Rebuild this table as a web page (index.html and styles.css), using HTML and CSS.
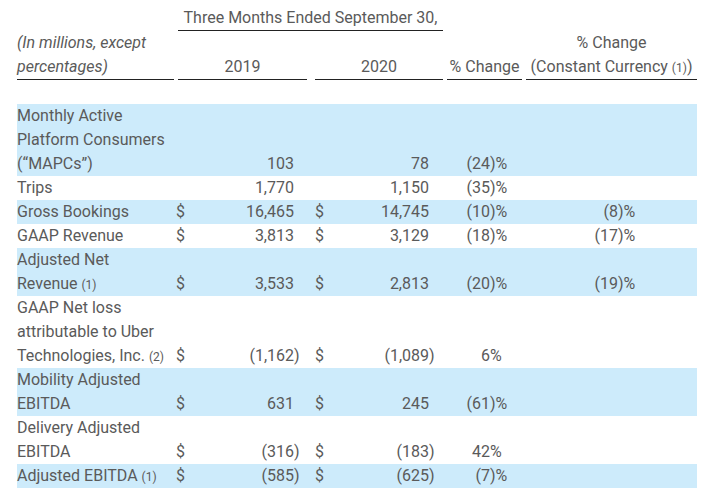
FILE: index.html
```html
<!DOCTYPE html>
<html lang="en">
<head>
<meta charset="utf-8">
<title>Uber Q3 2020 Key Metrics</title>
<link rel="stylesheet" href="styles.css">
</head>
<body>
<table class="fin">
  <colgroup>
    <col class="w-label">
    <col class="w-cur1">
    <col class="w-num1">
    <col class="w-par1">
    <col class="w-cur2">
    <col class="w-num2">
    <col class="w-par2">
    <col class="w-pct">
    <col class="w-pctsfx">
    <col class="w-cc">
    <col class="w-ccsfx">
  </colgroup>
  <thead>
    <tr class="h1">
      <th></th>
      <th colspan="6" class="hc"><div class="ul ul-three">Three Months Ended September 30,</div></th>
      <th colspan="2"></th>
      <th colspan="2"></th>
    </tr>
    <tr class="h2">
      <th class="hl"><div class="ul ul-label"><i>(In millions, except<br>percentages)</i></div></th>
      <th colspan="3" class="hc"><div class="ul ul-2019">2019</div></th>
      <th colspan="3" class="hc"><div class="ul ul-2020">2020</div></th>
      <th colspan="2" class="hc"><div class="ul ul-pct">% Change</div></th>
      <th colspan="2" class="hc"><div class="ul ul-cc">% Change<br>(Constant Currency <small>(1)</small>)</div></th>
    </tr>
    <tr class="spacer"><th colspan="11"></th></tr>
  </thead>
  <tbody>
    <tr class="blue">
      <td class="lbl">Monthly Active<br>Platform Consumers<br>(“MAPCs”)</td>
      <td></td><td class="n">103</td><td></td>
      <td></td><td class="n">78</td><td></td>
      <td class="n">(24</td><td class="s">)%</td>
      <td></td><td></td>
    </tr>
    <tr>
      <td class="lbl">Trips</td>
      <td></td><td class="n">1,770</td><td></td>
      <td></td><td class="n">1,150</td><td></td>
      <td class="n">(35</td><td class="s">)%</td>
      <td></td><td></td>
    </tr>
    <tr class="blue">
      <td class="lbl">Gross Bookings</td>
      <td class="c1">$</td><td class="n">16,465</td><td></td>
      <td class="c2">$</td><td class="n">14,745</td><td></td>
      <td class="n">(10</td><td class="s">)%</td>
      <td class="n">(8</td><td class="s">)%</td>
    </tr>
    <tr>
      <td class="lbl">GAAP Revenue</td>
      <td class="c1">$</td><td class="n">3,813</td><td></td>
      <td class="c2">$</td><td class="n">3,129</td><td></td>
      <td class="n">(18</td><td class="s">)%</td>
      <td class="n">(17</td><td class="s">)%</td>
    </tr>
    <tr class="blue">
      <td class="lbl">Adjusted Net<br>Revenue <small>(1)</small></td>
      <td class="c1">$</td><td class="n">3,533</td><td></td>
      <td class="c2">$</td><td class="n">2,813</td><td></td>
      <td class="n">(20</td><td class="s">)%</td>
      <td class="n">(19</td><td class="s">)%</td>
    </tr>
    <tr>
      <td class="lbl">GAAP Net loss<br>attributable to Uber<br>Technologies, Inc. <small>(2)</small></td>
      <td class="c1">$</td><td class="n">(1,162</td><td class="p">)</td>
      <td class="c2">$</td><td class="n">(1,089</td><td class="p">)</td>
      <td class="n">6</td><td class="s">%</td>
      <td></td><td></td>
    </tr>
    <tr class="blue">
      <td class="lbl">Mobility Adjusted<br>EBITDA</td>
      <td class="c1">$</td><td class="n">631</td><td></td>
      <td class="c2">$</td><td class="n">245</td><td></td>
      <td class="n">(61</td><td class="s">)%</td>
      <td></td><td></td>
    </tr>
    <tr>
      <td class="lbl">Delivery Adjusted<br>EBITDA</td>
      <td class="c1">$</td><td class="n">(316</td><td class="p">)</td>
      <td class="c2">$</td><td class="n">(183</td><td class="p">)</td>
      <td class="n">42</td><td class="s">%</td>
      <td></td><td></td>
    </tr>
    <tr class="blue">
      <td class="lbl">Adjusted EBITDA <small>(1)</small></td>
      <td class="c1">$</td><td class="n">(585</td><td class="p">)</td>
      <td class="c2">$</td><td class="n">(625</td><td class="p">)</td>
      <td class="n">(7</td><td class="s">)%</td>
      <td></td><td></td>
    </tr>
  </tbody>
</table>
</body>
</html>
```

FILE: styles.css
```css
html, body {
  margin: 0;
  padding: 0;
  background: #ffffff;
}
body {
  padding: 6px 0 0 17px;
  font-family: Roboto, "Liberation Sans", sans-serif;
  font-size: 16px;
  line-height: 24px;
  color: #5a5a5a;
}
.fin {
  border-collapse: collapse;
  border-spacing: 0;
  table-layout: fixed;
  width: 680px;
}
.w-label { width: 159px; }
.w-cur1 { width: 20px; }
.w-num1 { width: 98px; }
.w-par1 { width: 17px; }
.w-cur2 { width: 22px; }
.w-num2 { width: 96px; }
.w-par2 { width: 18px; }
.w-pct { width: 43px; }
.w-pctsfx { width: 36px; }
.w-cc { width: 92px; }
.w-ccsfx { width: 79px; }

th, td {
  padding: 0;
  font-weight: normal;
  vertical-align: bottom;
  white-space: nowrap;
}
th.hl { text-align: left; }
th.hc { text-align: center; }
.ul {
  border-bottom: 1px solid #222222;
}
.ul-three { margin: 0 4px 0 2px; }
.ul-label { margin-right: 2px; }
.ul-2019 { margin: 0 4px 0 2px; }
.ul-2020 { margin: 0 4px; }
.ul-pct { margin-right: 4px; }
.ul-cc { margin: 0; }
.spacer th { height: 24px; }

small {
  font-size: 12px;
  line-height: 0;
}
tr.blue td {
  background: #cdebfb;
}
td.lbl {
  text-align: left;
}
td.c1 {
  text-align: left;
}
td.c2 {
  text-align: left;
  padding-left: 4px;
}
td.n {
  text-align: right;
}
td.p, td.s {
  text-align: left;
}
```
